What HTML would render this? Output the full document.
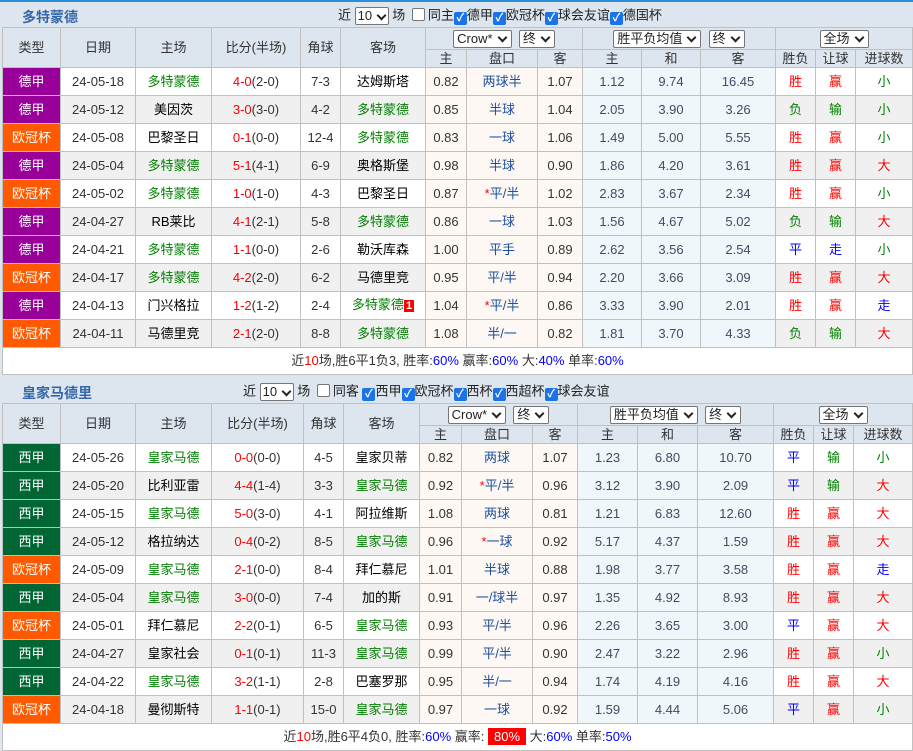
<!DOCTYPE html>
<html><head><meta charset="utf-8">
<style>
*{margin:0;padding:0;box-sizing:border-box}
body{width:913px;height:751px;overflow:hidden;background:#dde5ee;font-family:"Liberation Sans","Noto Sans CJK SC",sans-serif;font-size:13px;color:#333;position:relative}
.topbar{position:absolute;left:0;top:0;width:913px;height:2px;background:#2a8fd6}
.title{position:absolute;left:0;width:913px;height:25px}
.title b{position:absolute;left:22px;top:5px;color:#3366aa;font-size:14px}
.title .f{position:absolute;top:5px;white-space:nowrap;color:#222;line-height:16px}
.sel{display:inline-block;background:#fff;border:1px solid #767676;border-radius:2px;height:18px;line-height:16px;padding:0 3px;vertical-align:middle;font-size:13px;color:#222}
.sel:after{content:"";display:inline-block;width:5px;height:5px;border-right:2px solid #222;border-bottom:2px solid #222;transform:rotate(45deg);margin:0 2px 3px 6px;vertical-align:middle}
.cb{display:inline-block;width:13px;height:13px;border-radius:2px;vertical-align:-2px;background:#1a73e8;color:#fff;font-size:11px;line-height:13px;text-align:center;font-weight:bold}
.cb0{display:inline-block;width:13px;height:13px;border-radius:2px;vertical-align:-2px;border:1px solid #767676;background:#fff;margin:0 3px}
table{position:absolute;left:2px;width:910px;border-collapse:collapse;table-layout:fixed}
td,th{border:1px solid #c0c0c0;text-align:center;font-weight:normal;white-space:nowrap;overflow:hidden;line-height:16px}
th{background:#dde5ee;color:#333}
tr.d td{height:28px;background:#fff}
tr.g td{background:#f0f0f0}
tr.d td.a{background:#fdf8f4}
tr.d td.e{background:#f0f7fb}
td.t{color:#fff!important}
.dj{background:#990099!important}.oj{background:#ff5a00!important}.xj{background:#006633!important}
.gr{color:#008000}.rd{color:#f00}.bl{color:#1d50a0}.bk{color:#000}
.ab{color:#0000ff}
.sum td{background:#fff;height:27px;color:#333}
.n{color:#454a62}
.badge{background:#f00;color:#fff;font-size:11px;font-weight:bold;padding:0 2px}
.h1 th{height:22px;padding:0}
.h2 th{height:18px;padding:0}
</style></head><body>
<div class="topbar"></div>

<div class="title" style="top:2px"><b>多特蒙德</b>
<span class="f" style="left:338px">近 <span class="sel" style="width:34px;padding:0 2px">10</span> 场 <span class="cb0"></span>同主<span class="cb">✓</span>德甲<span class="cb">✓</span>欧冠杯<span class="cb">✓</span>球会友谊<span class="cb">✓</span>德国杯</span></div>

<table style="top:27px">
<colgroup><col style="width:58px"><col style="width:75px"><col style="width:76px"><col style="width:89px"><col style="width:40px"><col style="width:85px"><col style="width:41px"><col style="width:71px"><col style="width:45px"><col style="width:59px"><col style="width:59px"><col style="width:75px"><col style="width:40px"><col style="width:40px"><col style="width:57px"></colgroup>
<tr class="h1"><th rowspan="2">类型</th><th rowspan="2">日期</th><th rowspan="2">主场</th><th rowspan="2">比分(半场)</th><th rowspan="2">角球</th><th rowspan="2">客场</th><th colspan="3"><span class="sel">Crow*</span>&nbsp;&nbsp;<span class="sel">终</span></th><th colspan="3"><span class="sel">胜平负均值</span>&nbsp;&nbsp;<span class="sel">终</span></th><th colspan="3"><span class="sel">全场</span></th></tr>
<tr class="h2"><th>主</th><th>盘口</th><th>客</th><th>主</th><th>和</th><th>客</th><th>胜负</th><th>让球</th><th>进球数</th></tr>
<tr class="d"><td class="t dj">德甲</td><td>24-05-18</td><td class="gr">多特蒙德</td><td><span class="rd">4-0</span>(2-0)</td><td>7-3</td><td class="bk">达姆斯塔</td><td class="a">0.82</td><td class="a bl">两球半</td><td class="a">1.07</td><td class="e n">1.12</td><td class="e n">9.74</td><td class="e n">16.45</td><td class="rd">胜</td><td class="rd">赢</td><td class="gr">小</td></tr>
<tr class="d g"><td class="t dj">德甲</td><td>24-05-12</td><td class="bk">美因茨</td><td><span class="rd">3-0</span>(3-0)</td><td>4-2</td><td class="gr">多特蒙德</td><td class="a">0.85</td><td class="a bl">半球</td><td class="a">1.04</td><td class="e n">2.05</td><td class="e n">3.90</td><td class="e n">3.26</td><td class="gr">负</td><td class="gr">输</td><td class="gr">小</td></tr>
<tr class="d"><td class="t oj">欧冠杯</td><td>24-05-08</td><td class="bk">巴黎圣日</td><td><span class="rd">0-1</span>(0-0)</td><td>12-4</td><td class="gr">多特蒙德</td><td class="a">0.83</td><td class="a bl">一球</td><td class="a">1.06</td><td class="e n">1.49</td><td class="e n">5.00</td><td class="e n">5.55</td><td class="rd">胜</td><td class="rd">赢</td><td class="gr">小</td></tr>
<tr class="d g"><td class="t dj">德甲</td><td>24-05-04</td><td class="gr">多特蒙德</td><td><span class="rd">5-1</span>(4-1)</td><td>6-9</td><td class="bk">奥格斯堡</td><td class="a">0.98</td><td class="a bl">半球</td><td class="a">0.90</td><td class="e n">1.86</td><td class="e n">4.20</td><td class="e n">3.61</td><td class="rd">胜</td><td class="rd">赢</td><td class="rd">大</td></tr>
<tr class="d"><td class="t oj">欧冠杯</td><td>24-05-02</td><td class="gr">多特蒙德</td><td><span class="rd">1-0</span>(1-0)</td><td>4-3</td><td class="bk">巴黎圣日</td><td class="a">0.87</td><td class="a bl"><span class="rd">*</span>平/半</td><td class="a">1.02</td><td class="e n">2.83</td><td class="e n">3.67</td><td class="e n">2.34</td><td class="rd">胜</td><td class="rd">赢</td><td class="gr">小</td></tr>
<tr class="d g"><td class="t dj">德甲</td><td>24-04-27</td><td class="bk">RB莱比</td><td><span class="rd">4-1</span>(2-1)</td><td>5-8</td><td class="gr">多特蒙德</td><td class="a">0.86</td><td class="a bl">一球</td><td class="a">1.03</td><td class="e n">1.56</td><td class="e n">4.67</td><td class="e n">5.02</td><td class="gr">负</td><td class="gr">输</td><td class="rd">大</td></tr>
<tr class="d"><td class="t dj">德甲</td><td>24-04-21</td><td class="gr">多特蒙德</td><td><span class="rd">1-1</span>(0-0)</td><td>2-6</td><td class="bk">勒沃库森</td><td class="a">1.00</td><td class="a bl">平手</td><td class="a">0.89</td><td class="e n">2.62</td><td class="e n">3.56</td><td class="e n">2.54</td><td class="ab">平</td><td class="ab">走</td><td class="gr">小</td></tr>
<tr class="d g"><td class="t oj">欧冠杯</td><td>24-04-17</td><td class="gr">多特蒙德</td><td><span class="rd">4-2</span>(2-0)</td><td>6-2</td><td class="bk">马德里竞</td><td class="a">0.95</td><td class="a bl">平/半</td><td class="a">0.94</td><td class="e n">2.20</td><td class="e n">3.66</td><td class="e n">3.09</td><td class="rd">胜</td><td class="rd">赢</td><td class="rd">大</td></tr>
<tr class="d"><td class="t dj">德甲</td><td>24-04-13</td><td class="bk">门兴格拉</td><td><span class="rd">1-2</span>(1-2)</td><td>2-4</td><td class="gr">多特蒙德<span class="badge">1</span></td><td class="a">1.04</td><td class="a bl"><span class="rd">*</span>平/半</td><td class="a">0.86</td><td class="e n">3.33</td><td class="e n">3.90</td><td class="e n">2.01</td><td class="rd">胜</td><td class="rd">赢</td><td class="ab">走</td></tr>
<tr class="d g"><td class="t oj">欧冠杯</td><td>24-04-11</td><td class="bk">马德里竞</td><td><span class="rd">2-1</span>(2-0)</td><td>8-8</td><td class="gr">多特蒙德</td><td class="a">1.08</td><td class="a bl">半/一</td><td class="a">0.82</td><td class="e n">1.81</td><td class="e n">3.70</td><td class="e n">4.33</td><td class="gr">负</td><td class="gr">输</td><td class="rd">大</td></tr>
<tr class="sum"><td colspan="15">近<span class="rd">10</span>场,胜6平1负3, 胜率:<span class="ab">60%</span> 赢率:<span class="ab">60%</span> 大:<span class="ab">40%</span> 单率:<span class="ab">60%</span></td></tr>
</table>

<div class="title" style="top:378px"><b>皇家马德里</b>
<span class="f" style="left:243px">近 <span class="sel" style="width:34px;padding:0 2px">10</span> 场 <span class="cb0"></span>同客 <span class="cb">✓</span>西甲<span class="cb">✓</span>欧冠杯<span class="cb">✓</span>西杯<span class="cb">✓</span>西超杯<span class="cb">✓</span>球会友谊</span></div>

<table style="top:403px">
<colgroup><col style="width:58px"><col style="width:75px"><col style="width:76px"><col style="width:92px"><col style="width:40px"><col style="width:76px"><col style="width:42px"><col style="width:71px"><col style="width:45px"><col style="width:60px"><col style="width:60px"><col style="width:76px"><col style="width:40px"><col style="width:40px"><col style="width:59px"></colgroup>
<tr class="h1"><th rowspan="2">类型</th><th rowspan="2">日期</th><th rowspan="2">主场</th><th rowspan="2">比分(半场)</th><th rowspan="2">角球</th><th rowspan="2">客场</th><th colspan="3"><span class="sel">Crow*</span>&nbsp;&nbsp;<span class="sel">终</span></th><th colspan="3"><span class="sel">胜平负均值</span>&nbsp;&nbsp;<span class="sel">终</span></th><th colspan="3"><span class="sel">全场</span></th></tr>
<tr class="h2"><th>主</th><th>盘口</th><th>客</th><th>主</th><th>和</th><th>客</th><th>胜负</th><th>让球</th><th>进球数</th></tr>
<tr class="d"><td class="t xj">西甲</td><td>24-05-26</td><td class="gr">皇家马德</td><td><span class="rd">0-0</span>(0-0)</td><td>4-5</td><td class="bk">皇家贝蒂</td><td class="a">0.82</td><td class="a bl">两球</td><td class="a">1.07</td><td class="e n">1.23</td><td class="e n">6.80</td><td class="e n">10.70</td><td class="ab">平</td><td class="gr">输</td><td class="gr">小</td></tr>
<tr class="d g"><td class="t xj">西甲</td><td>24-05-20</td><td class="bk">比利亚雷</td><td><span class="rd">4-4</span>(1-4)</td><td>3-3</td><td class="gr">皇家马德</td><td class="a">0.92</td><td class="a bl"><span class="rd">*</span>平/半</td><td class="a">0.96</td><td class="e n">3.12</td><td class="e n">3.90</td><td class="e n">2.09</td><td class="ab">平</td><td class="gr">输</td><td class="rd">大</td></tr>
<tr class="d"><td class="t xj">西甲</td><td>24-05-15</td><td class="gr">皇家马德</td><td><span class="rd">5-0</span>(3-0)</td><td>4-1</td><td class="bk">阿拉维斯</td><td class="a">1.08</td><td class="a bl">两球</td><td class="a">0.81</td><td class="e n">1.21</td><td class="e n">6.83</td><td class="e n">12.60</td><td class="rd">胜</td><td class="rd">赢</td><td class="rd">大</td></tr>
<tr class="d g"><td class="t xj">西甲</td><td>24-05-12</td><td class="bk">格拉纳达</td><td><span class="rd">0-4</span>(0-2)</td><td>8-5</td><td class="gr">皇家马德</td><td class="a">0.96</td><td class="a bl"><span class="rd">*</span>一球</td><td class="a">0.92</td><td class="e n">5.17</td><td class="e n">4.37</td><td class="e n">1.59</td><td class="rd">胜</td><td class="rd">赢</td><td class="rd">大</td></tr>
<tr class="d"><td class="t oj">欧冠杯</td><td>24-05-09</td><td class="gr">皇家马德</td><td><span class="rd">2-1</span>(0-0)</td><td>8-4</td><td class="bk">拜仁慕尼</td><td class="a">1.01</td><td class="a bl">半球</td><td class="a">0.88</td><td class="e n">1.98</td><td class="e n">3.77</td><td class="e n">3.58</td><td class="rd">胜</td><td class="rd">赢</td><td class="ab">走</td></tr>
<tr class="d g"><td class="t xj">西甲</td><td>24-05-04</td><td class="gr">皇家马德</td><td><span class="rd">3-0</span>(0-0)</td><td>7-4</td><td class="bk">加的斯</td><td class="a">0.91</td><td class="a bl">一/球半</td><td class="a">0.97</td><td class="e n">1.35</td><td class="e n">4.92</td><td class="e n">8.93</td><td class="rd">胜</td><td class="rd">赢</td><td class="rd">大</td></tr>
<tr class="d"><td class="t oj">欧冠杯</td><td>24-05-01</td><td class="bk">拜仁慕尼</td><td><span class="rd">2-2</span>(0-1)</td><td>6-5</td><td class="gr">皇家马德</td><td class="a">0.93</td><td class="a bl">平/半</td><td class="a">0.96</td><td class="e n">2.26</td><td class="e n">3.65</td><td class="e n">3.00</td><td class="ab">平</td><td class="rd">赢</td><td class="rd">大</td></tr>
<tr class="d g"><td class="t xj">西甲</td><td>24-04-27</td><td class="bk">皇家社会</td><td><span class="rd">0-1</span>(0-1)</td><td>11-3</td><td class="gr">皇家马德</td><td class="a">0.99</td><td class="a bl">平/半</td><td class="a">0.90</td><td class="e n">2.47</td><td class="e n">3.22</td><td class="e n">2.96</td><td class="rd">胜</td><td class="rd">赢</td><td class="gr">小</td></tr>
<tr class="d"><td class="t xj">西甲</td><td>24-04-22</td><td class="gr">皇家马德</td><td><span class="rd">3-2</span>(1-1)</td><td>2-8</td><td class="bk">巴塞罗那</td><td class="a">0.95</td><td class="a bl">半/一</td><td class="a">0.94</td><td class="e n">1.74</td><td class="e n">4.19</td><td class="e n">4.16</td><td class="rd">胜</td><td class="rd">赢</td><td class="rd">大</td></tr>
<tr class="d g"><td class="t oj">欧冠杯</td><td>24-04-18</td><td class="bk">曼彻斯特</td><td><span class="rd">1-1</span>(0-1)</td><td>15-0</td><td class="gr">皇家马德</td><td class="a">0.97</td><td class="a bl">一球</td><td class="a">0.92</td><td class="e n">1.59</td><td class="e n">4.44</td><td class="e n">5.06</td><td class="ab">平</td><td class="rd">赢</td><td class="gr">小</td></tr>
<tr class="sum"><td colspan="15">近<span class="rd">10</span>场,胜6平4负0, 胜率:<span class="ab">60%</span> 赢率: <span style="background:#f00;color:#fff;padding:1px 6px">80%</span> 大:<span class="ab">60%</span> 单率:<span class="ab">50%</span></td></tr>
</table>
</body></html>
